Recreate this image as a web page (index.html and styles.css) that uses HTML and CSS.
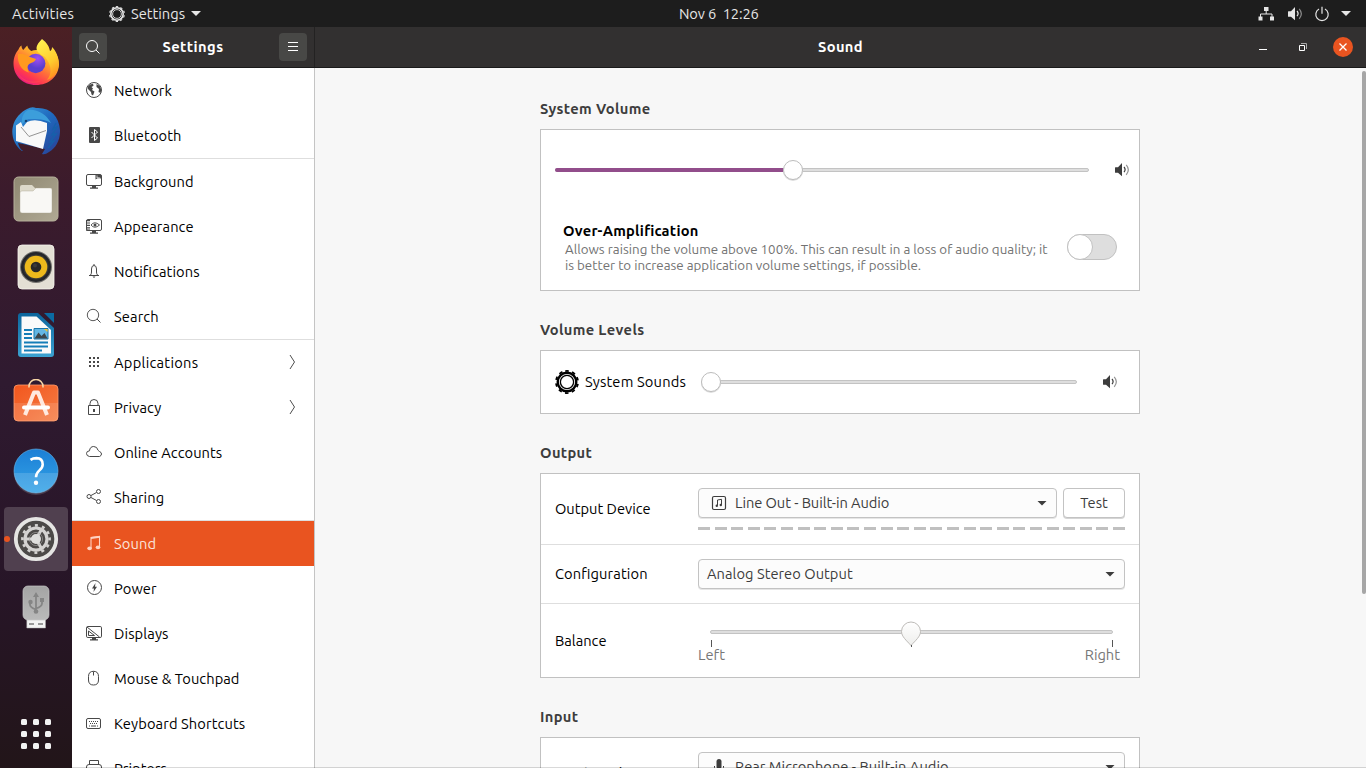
FILE: index.html
```html
<!DOCTYPE html>
<html lang="en">
<head>
<meta charset="utf-8">
<title>Settings - Sound</title>
<link rel="stylesheet" href="styles.css">
</head>
<body>
<svg class="defs" width="0" height="0">
  <defs>
    <linearGradient id="ffBody" x1=".85" y1=".05" x2=".2" y2=".95"><stop offset="0" stop-color="#fff44f"/><stop offset=".3" stop-color="#ffb52a"/><stop offset=".55" stop-color="#ff7139"/><stop offset=".8" stop-color="#ff3750"/><stop offset="1" stop-color="#e5178a"/></linearGradient>
    <linearGradient id="ffFlame" x1=".3" y1="0" x2=".7" y2="1"><stop offset="0" stop-color="#fff04e"/><stop offset=".6" stop-color="#ffcb2e"/><stop offset="1" stop-color="#ff8a1e"/></linearGradient>
    <radialGradient id="ffGlobe" cx=".6" cy=".25"><stop offset="0" stop-color="#a04ff2"/><stop offset="1" stop-color="#5a3fd0"/></radialGradient>
    <linearGradient id="tb" x1="0" y1="0" x2="1" y2="1"><stop offset="0" stop-color="#3ba0e0"/><stop offset=".5" stop-color="#1f68bd"/><stop offset="1" stop-color="#2a3f94"/></linearGradient>
    <linearGradient id="bag" x1="0" y1="0" x2="1" y2="1"><stop offset="0" stop-color="#f2561d"/><stop offset="1" stop-color="#f57d45"/></linearGradient>
    <linearGradient id="help" x1="0" y1="0" x2="0" y2="1"><stop offset="0" stop-color="#1c7fd6"/><stop offset="1" stop-color="#33a3e6"/></linearGradient>
    <linearGradient id="files" x1="0" y1="0" x2="1" y2="1"><stop offset="0" stop-color="#8f8872"/><stop offset="1" stop-color="#b0a994"/></linearGradient>
    <linearGradient id="usb" x1="0" y1="0" x2="0" y2="1"><stop offset="0" stop-color="#a4a4a4"/><stop offset="1" stop-color="#bababa"/></linearGradient>
    <linearGradient id="writer" x1="0" y1="0" x2="0" y2="1"><stop offset="0" stop-color="#0b659c"/><stop offset="1" stop-color="#3ba2d1"/></linearGradient>
    <linearGradient id="knob" x1="0" y1="0" x2="0" y2="1"><stop offset="0" stop-color="#fff"/><stop offset="1" stop-color="#eeeeec"/></linearGradient>
    <g id="gear" fill="none" stroke="currentColor">
      <circle cx="12" cy="12" r="9.3" stroke-width="2.4"/>
      <circle cx="12" cy="12" r="6.6" stroke-width="1.3"/>
      <circle cx="12" cy="12" r="11.1" stroke-width="1.7" stroke-dasharray="3.5 3.475" transform="rotate(-99 12 12)"/>
    </g>
    <g id="speaker">
      <path d="M1 5.5Q1 5 1.5 5H4l4-4.2V14L4 10.5H1.5Q1 10.500 1 10Z" fill="currentColor" transform="translate(0 .2)"/>
      <path d="M10 5q2.200 2.500 0 5.200" fill="none" stroke="currentColor" stroke-width="1.200"/>
      <path d="M12.200 2.800q4.300 4.800 0 10" fill="none" stroke="currentColor" stroke-width="1.200" opacity=".55"/>
    </g>
  </defs>
</svg>

<header class="topbar">
  <span class="activities">Activities</span>
  <span class="appmenu">
    <svg width="16" height="16" viewBox="0 0 24 24"><use href="#gear"/></svg>
    <span class="applabel">Settings</span><i class="caret"></i>
  </span>
  <span class="clock">Nov 6&nbsp; 12:26</span>
  <span class="tray">
    <svg width="16" height="16" viewBox="0 0 16 16"><path d="M6 1h4.500v4H6zM.5 10.500h4v4h-4zM12 10.500h4v4h-4z" fill="currentColor"/><path d="M8.200 4v4M2.500 11V8h11.500v3" fill="none" stroke="currentColor"/></svg>
    <svg class="vol" width="16" height="16" viewBox="0 0 16 16"><use href="#speaker"/></svg>
    <svg width="16" height="16" viewBox="0 0 16 16"><path d="M5 3A6.200 6.200 0 1 0 11 3M8 .8v7" fill="none" stroke="currentColor" stroke-width="1.200"/></svg>
    <i class="caret"></i>
  </span>
</header>

<div class="workspace">
<nav class="dock">
  <div class="app"><svg viewBox="0 0 48 48">
    <path d="M24 46C11 46 1.500 37 1.500 24.500 1.500 18 4 13.500 6.500 10.500 7 9 8 7.500 9.500 6.500c0 2 .7 3.500 1.700 4.400l4-4.500c.5 2 1.800 4 4 5.500C24 10 31 12 31 12L43 13q4 6 4 12.500C46.500 37.500 37 46 24 46Z" fill="url(#ffBody)"/>
    <path d="M30 0c5 4 7 7 8 12 1.500-.5 2-2 2-4 4 4 6.700 9.500 6.800 17C46 34 41 39 35 41 41 34 39 25 33 18 24 13 21 9 30 0Z" fill="url(#ffFlame)"/>
    <circle cx="23.700" cy="24.500" r="9.700" fill="url(#ffGlobe)"/>
    <path d="M6 15c4-1 9 1 12 3 2 1 4 1 6 2-1 3-4 3.500-6 4.500-3 1.500-3 5-1 9-8-2-12-10-11-18.500Z" fill="#ff9a1f"/>
    <path d="M4 31c5 11 18 15 30 8-9 8-25 7-30-8Z" fill="#ff4754" opacity=".6"/>
  </svg></div>
  <div class="app"><svg viewBox="0 0 48 48">
    <path d="M10 44C2 38-1 28 .8 20 2.500 11 9 5 15 2q5-3 9-1C38 0 47 9 48 23c.3 10-4 18-11 22q-4 3-7 2l3-5-22-5-5-1q1 5 5 8Z" fill="url(#tb)"/>
    <path d="M16 3c9-1 18 4 23 13-6-4-14-4-23-4l-6 5C9 10 12 5 16 3Z" fill="#3c9edb"/>
    <path d="M4 18.500 9 15l2 5 4-5q8-4 20 1L35 24 31 42 4 34Z" fill="#f8f8f8"/>
    <path d="m9 20 8 9.500L34 23.500" fill="none" stroke="#888" stroke-width=".9"/>
    <path d="m44 16-3 6 4-2-5 8 4-1-6 8 4-1-6 7" fill="none" stroke="#1660aa" stroke-width="1.400"/>
    <circle cx="14" cy="14" r="1.300" fill="#154172"/>
  </svg></div>
  <div class="app"><svg viewBox="0 0 48 48">
    <rect x="2" y="2" width="44" height="44" rx="4.500" fill="url(#files)" stroke="#b6b09b"/>
    <path d="M8 12q0-2 2-2h10l3 3h15q2 0 2 2v7H8Z" fill="#ddd9ca"/>
    <path d="M8 18q0-2 2-2h11l3-3h14q2 0 2 2v21q0 2-2 2H10q-2 0-2-2Z" fill="#f9f8f5" stroke="#aaa48f" stroke-width=".4"/>
  </svg></div>
  <div class="app"><svg viewBox="0 0 48 48">
    <rect x="6" y="2" width="36" height="44" rx="4" fill="#e3dfd4" stroke="#f7f5ef" stroke-width=".8"/>
    <circle cx="24" cy="24" r="16" fill="#74736f"/><circle cx="24" cy="24" r="15" fill="#24262a"/><circle cx="24" cy="24" r="12.500" fill="#3c3b35"/><circle cx="24" cy="24" r="11.300" fill="#edb91c"/><circle cx="24" cy="24" r="5.300" fill="#272727"/><circle cx="23" cy="22.500" r="2" fill="#3a3a3a"/>
  </svg></div>
  <div class="app"><svg viewBox="0 0 48 48">
    <path d="M9 2h17l16 15v26q0 3-3 3H9q-3 0-3-3V5q0-3 3-3Z" fill="url(#writer)"/>
    <path d="M32 2h10v10Z" fill="#0b6ba3"/>
    <path d="M9.500 5.500h15L39 19v23.500H9.500Z" fill="#fafafa"/>
    <path d="M12 19h8M12 23h8M12 27h8M12 31.500h24M12 35.500h24M12 39.500h18" stroke="#157db7" stroke-width="1.800"/>
    <path d="M22 17.500h14V28H22Z" fill="#63b7e4" stroke="#1976aa"/><path d="m22.500 27.500 4-6 3 3.500 3-3 3 5.500Z" fill="#3d474c"/><path d="M32 18h3.500v3Z" fill="#f7c52b"/>
  </svg></div>
  <div class="app"><svg viewBox="0 0 48 48">
    <rect x="2" y="6" width="44" height="36" rx="4" fill="url(#bag)" stroke="#ff9b6a" stroke-width=".8"/>
    <path d="M2 24h44v14q0 4-4 4H6q-4 0-4-4Z" fill="#fff" opacity=".13"/>
    <path d="M17 8.500V7.500a7 7 0 0 1 14 0v1" fill="none" stroke="#f8d6a6" stroke-width="1.600"/>
    <path d="m13 36 9-22.500h4L35 36" fill="none" stroke="#ffe9df" stroke-width="4" stroke-linejoin="round"/><path d="M12 28.500h24" stroke="#fff" stroke-width="4" stroke-linecap="round"/>
  </svg></div>
  <div class="app"><svg viewBox="0 0 48 48">
    <circle cx="24" cy="24" r="22" fill="url(#help)" stroke="#66b8ed" stroke-width=".6"/><path d="M2 26a22 22 0 0 0 44 0Z" fill="#fff" opacity=".15"/>
    <path d="M18.500 12.800q2.500-1.700 6-1.700 6.200.2 6.200 6.300 0 3-3.300 6-3.400 3-3.400 6.800" fill="none" stroke="#fff" stroke-width="2.600"/><circle cx="24" cy="35.700" r="2.200" fill="#fff"/>
  </svg></div>
  <div class="app active"><i class="running"></i><svg viewBox="0 0 48 48">
    <circle cx="24" cy="24" r="20.200" fill="#4c4a48" stroke="#e5e5e3" stroke-width="3.800"/>
    <g fill="none" stroke="#d4d3d1"><circle cx="24" cy="24" r="13.600" stroke-width="2.600" stroke-dasharray="3 4.121" transform="rotate(-6.300 24 24)"/><circle cx="24" cy="24" r="11" stroke-width="3.200"/><path d="M24 24h-11M24 24l5.500 9.500M24 24l5.500-9.500" stroke-width="3"/></g>
    <circle cx="24" cy="24" r="5" fill="#dededc"/><circle cx="24" cy="24" r="6.600" fill="none" stroke="#a9a8a6" stroke-width=".6"/>
  </svg></div>
  <div class="app"><svg viewBox="0 0 48 48">
    <path d="M14.800 36h18.700v9H14.800z" fill="#f3f3f3" stroke="#aaa" stroke-width=".5"/><path d="M17 41h5M26 41h5" stroke="#999" stroke-width="1.800"/>
    <rect x="11" y="3" width="26" height="34" rx="5" fill="url(#usb)" stroke="#c5c5c5" stroke-width=".7"/>
    <path d="M24 13v15M18 19v2.500q0 3 6 5M30 18v2.500q0 3-6 5" fill="none" stroke="#858585" stroke-width="1.800"/><path d="m24 9 3 5h-6ZM28 15h4v4h-4z" fill="#858585"/><circle cx="18.500" cy="19" r="2.200" fill="#858585"/><circle cx="24" cy="28.500" r="2.300" fill="#858585"/>
  </svg></div>
  <div class="grid9"><i></i><i></i><i></i><i></i><i></i><i></i><i></i><i></i><i></i></div>
</nav>

<section class="window">
  <div class="titlebar">
    <div class="left">
      <span class="tbtn"><svg width="16" height="16" viewBox="0 0 16 16"><circle cx="7" cy="7" r="5.500" fill="none" stroke="#fff"/><path d="m11 11 3.500 3.500" stroke="#fff"/></svg></span>
      <b class="wtitle">Settings</b>
      <span class="tbtn"><svg width="16" height="16" viewBox="0 0 16 16"><path d="M3 3.500h10M3 7.500h10M3 11.500h10" stroke="#fff"/></svg></span>
    </div>
    <div class="right">
      <b class="wtitle">Sound</b>
      <div class="controls">
        <svg width="16" height="16" viewBox="0 0 16 16"><path d="M4 10.500h8" stroke="#fff"/></svg>
        <svg width="16" height="16" viewBox="0 0 16 16"><path d="M4.500 6.500h5v5h-5z" fill="none" stroke="#fff"/><path d="M6 4.500h5.500V10" fill="none" stroke="#aaa"/></svg>
        <span class="close"><svg width="16" height="16" viewBox="0 0 16 16"><path d="m4.500 4.500 7 7m0-7-7 7" stroke="#fff" stroke-width="1.300"/></svg></span>
      </div>
    </div>
  </div>

  <div class="body">
  <aside class="sidebar">
    <div class="item"><svg viewBox="0 0 16 16"><circle cx="8" cy="8" r="7.500" fill="none" stroke="currentColor"/><path d="M1.500 5 4 2.500l3-.8.5 2L5.500 5 7 6.500 6 8l2.500 1.500L7 13.500 5.500 12.500 5 10 2 7ZM10.500 2l3.500 2 1.300 4-.8 3-2-1 .5-3-2.500-2Z" fill="currentColor"/></svg><span>Network</span></div>
    <div class="item"><svg viewBox="0 0 16 16"><rect x="3" width="11" height="16" rx="1" fill="currentColor"/><path d="m5.500 5 6 6L8.500 13.500v-11L11.500 5l-6 6" fill="none" stroke="#fff"/></svg><span>Bluetooth</span></div>
    <div class="item sep"><svg viewBox="0 -1 16 16"><rect x=".5" y=".5" width="15" height="11" rx="1.500" fill="none" stroke="currentColor"/><path d="M9.500 .5l0 5q3-2 6-.5V1.500L14 .5Z" fill="currentColor"/><path d="M11 1.500V4q2-.8 3.500.3" fill="none" stroke="#fff" stroke-width=".7"/><path d="M6 12h4v1.500h2v1.200H4v-1.200h2Z" fill="currentColor"/></svg><span>Background</span></div>
    <div class="item"><svg viewBox="0 -1 16 16"><rect x=".5" y=".5" width="15" height="11" rx="1.500" fill="none" stroke="currentColor"/><path d="M2 1v11" stroke="currentColor" stroke-width="4" stroke-dasharray="1.200 1.200"/><path d="M5 6q3.500-4.500 8.500 0-5 4.500-8.500 0Z" fill="none" stroke="currentColor" stroke-width=".9"/><circle cx="9" cy="6" r="1.500" fill="currentColor"/><path d="M6 12h4v1.500h2v1.200H4v-1.200h2Z" fill="currentColor"/></svg><span>Appearance</span></div>
    <div class="item"><svg viewBox="0 0 16 16"><path d="M3 12.500h10M4.500 12q1-1 1-3V6q0-3.500 2.500-3.500T10.500 6v3q0 2 1 3M8 1v1.500" fill="none" stroke="currentColor"/><path d="M6.500 13.500h3L8 15Z" fill="currentColor"/></svg><span>Notifications</span></div>
    <div class="item"><svg viewBox="0 0 16 16"><circle cx="7" cy="7" r="5.700" fill="none" stroke="currentColor" stroke-width=".9"/><path d="m11 11 3.500 3.500" stroke="currentColor"/></svg><span>Search</span></div>
    <div class="item sep"><svg viewBox="0 0 16 16"><path d="M3 4h10M3 8h10M3 12h10" stroke="currentColor" stroke-width="2" stroke-dasharray="2 2"/></svg><span class="wide">Applications</span><svg class="chev" viewBox="0 0 8 16"><path d="m2 1 4.500 7L2 15" fill="none" stroke="#4d4d4d"/></svg></div>
    <div class="item"><svg viewBox="0 0 16 16"><path d="M2.500 6.500h11v9h-11zM4 6V4.500q0-4 4-4t4 4V6" fill="none" stroke="currentColor"/><path d="M7 10h2v3H7z" fill="currentColor"/></svg><span>Privacy</span><svg class="chev" viewBox="0 0 8 16"><path d="m2 1 4.500 7L2 15" fill="none" stroke="#4d4d4d"/></svg></div>
    <div class="item"><svg viewBox="0 0 16 16"><path d="M3.500 12.500Q.5 12 .5 9.500T3.500 6.800Q4 2.500 7.700 2.500q3.500 0 4.300 3.700.5.500 1.500 1.300 2 .8 2 2.500t-2 2.500Z" fill="none" stroke="currentColor"/></svg><span class="narrow">Online Accounts</span></div>
    <div class="item"><svg viewBox="0 0 16 16"><g fill="none" stroke="currentColor"><circle cx="3" cy="7.500" r="2"/><circle cx="12.500" cy="2.500" r="2"/><circle cx="12.500" cy="12.500" r="2"/><path d="m5 6.500 5.500-3M5 8.500l5.500 3"/></g></svg><span>Sharing</span></div>
    <div class="item sep selected"><svg viewBox="0 0 16 16"><path d="M5 13V2.500l8.500-1V12" fill="none" stroke="currentColor" stroke-width="1.100"/><path d="M5 2l9-1.200v2L5 4Z" fill="currentColor"/><ellipse cx="3.600" cy="13.300" rx="2.300" ry="1.900" fill="currentColor"/><ellipse cx="12" cy="12.300" rx="2.300" ry="1.900" fill="currentColor"/></svg><span>Sound</span></div>
    <div class="item"><svg viewBox="0 0 16 16"><circle cx="8.500" cy="7.500" r="7" fill="none" stroke="currentColor"/><path d="m9.500 3-3.500 5.500h2L7.500 12 11 6.800H9Z" fill="currentColor"/></svg><span>Power</span></div>
    <div class="item"><svg viewBox="0 0 16 16"><rect x=".5" y="1.500" width="15" height="11" rx="1.300" fill="none" stroke="currentColor"/><path d="m1 2 12.500 10M2.500 6v4.500h6Z" fill="none" stroke="currentColor"/><path d="M6 13h4v1.300h2v1.200H4v-1.200h2Z" fill="currentColor"/></svg><span>Displays</span></div>
    <div class="item"><svg viewBox="0 -.5 16 16"><path d="M2.500 6Q2.500.8 7.500.8T12.500 6v3.500q0 5-5 5t-5-5ZM7.500 1v4" fill="none" stroke="currentColor"/></svg><span class="narrow">Mouse &amp; Touchpad</span></div>
    <div class="item"><svg viewBox="0 -1 16 16"><rect x=".5" y="2.500" width="14" height="10" rx="1.500" fill="none" stroke="currentColor"/><path d="M3 5.500h10M4 7.500h8" stroke="currentColor" stroke-dasharray="1 1"/><path d="M3 10h1m1 0h5m1 0h1" stroke="currentColor"/></svg><span>Keyboard Shortcuts</span></div>
    <div class="item"><svg viewBox="0 0 16 16"><path d="M3.500 4.500v-4h9v4M2.500 12.500Q.5 12.500.5 10.500V7q0-2.500 2.500-2.500h10q2.500 0 2.500 2.500v3.500q0 2-2 2M3.500 9.500h9v6h-9z" fill="none" stroke="currentColor"/></svg><span>Printers</span></div>
  </aside>

  <main class="content">
    <div class="page">
      <h2>System Volume</h2>
      <div class="card volume">
        <div class="volrow">
          <div class="slider"><div class="fill" style="width:44.5%"></div><i class="knob" style="left:44.5%"></i></div>
          <svg width="16" height="16" viewBox="0 0 16 16"><use href="#speaker"/></svg>
        </div>
        <div class="amprow">
          <div class="amptext">
            <b>Over-Amplification</b>
            <p><span class="tight">Allows raising the volume above 100%. This can result in a loss of audio quality; it</span><br><span>is better to increase application volume settings, if possible.</span></p>
          </div>
          <div class="switch"><i></i></div>
        </div>
      </div>

      <h2>Volume Levels</h2>
      <div class="card levels">
        <svg width="24" height="24" viewBox="0 0 24 24"><use href="#gear"/></svg>
        <span class="syslabel">System Sounds</span>
        <div class="slider"><i class="knob" style="left:0"></i></div>
        <svg class="spk" width="16" height="16" viewBox="0 0 16 16"><use href="#speaker"/></svg>
      </div>

      <h2>Output</h2>
      <div class="card output">
        <div class="row device">
          <span class="label">Output Device</span>
          <div class="field">
            <div class="line">
              <div class="combo"><svg width="16" height="16" viewBox="0 0 16 16"><rect x="1.500" y="1.500" width="13" height="13" rx="1.500" fill="none" stroke="currentColor" stroke-width="1.200"/><path d="M6.500 10.500V5l4-.7v5.500" fill="none" stroke="currentColor"/><circle cx="5.800" cy="10.800" r="1.200" fill="currentColor"/><circle cx="9.800" cy="10" r="1.200" fill="currentColor"/></svg><span class="lineout">Line Out - Built-in Audio</span><i class="caret dark"></i></div>
              <div class="button"><span>Test</span></div>
            </div>
            <div class="meter"></div>
          </div>
        </div>
        <div class="row config">
          <span class="label wide">Configuration</span>
          <div class="combo plain"><span>Analog Stereo Output</span><i class="caret dark"></i></div>
        </div>
        <div class="row balance">
          <span class="label">Balance</span>
          <div class="field">
            <div class="slider"><svg class="drop" width="22" height="27" viewBox="0 0 22 27"><path d="M11 1a9.500 9.500 0 0 1 9.500 9.500c0 5-5 9-9.500 14-4.500-5-9.500-9-9.500-14A9.500 9.500 0 0 1 11 1Z" fill="url(#knob)" stroke="#bdbbb8"/><path d="M11.500 24v2" stroke="#555"/></svg></div>
            <div class="ticks"><i></i><i></i></div>
            <div class="ends"><span>Left</span><span>Right</span></div>
          </div>
        </div>
      </div>

      <h2>Input</h2>
      <div class="card input">
        <div class="row device">
          <span class="label">Input Device</span>
          <div class="field">
            <div class="combo"><svg width="16" height="16" viewBox="0 0 16 16"><rect x="5.500" y="0" width="5" height="10" rx="2.500" fill="currentColor"/><path d="M3.500 7v1.500q0 4 4.500 4t4.500-4V7M8 12.500V15" fill="none" stroke="currentColor"/></svg><span>Rear Microphone - Built-in Audio</span><i class="caret dark"></i></div>
          </div>
        </div>
      </div>
    </div>
    <div class="scrollbar"></div>
  </main>
  </div>
</section>
</div>
</body>
</html>
```
FILE: styles.css
```css
* { box-sizing: border-box; }
html, body { margin: 0; height: 768px; overflow: hidden; }
body { width: 1366px; font: 14.667px/20px "Ubuntu", "Noto Sans", sans-serif; font-feature-settings: "liga" 1; color: #000; display: flex; flex-direction: column; background: #f7f7f7; }
svg { flex: none; display: block; }
.defs { position: absolute; }
span { white-space: nowrap; }
i { display: block; flex: none; }

.topbar { flex: none; height: 27px; background: #1d1d1d; color: #e6e6e6; display: grid; grid-template-columns: 97px 1fr auto 1fr; align-items: center; padding: 0 15px 0 12px; position: relative; }
.activities { letter-spacing: .2px; }
.appmenu { display: flex; align-items: center; gap: 6px; }
.clock { position: absolute; left: 679px; letter-spacing: -.12px; }
.tray { grid-column: 4; justify-self: end; display: flex; align-items: center; gap: 12px; }
.tray .vol { margin: 0 -1px 0 1px; }
.tray .caret { margin-left: -1px; }
.caret { width: 10px; height: 5px; background: currentColor; clip-path: polygon(0 0, 100% 0, 50% 100%); }
.caret.dark { background: #3d3d3d; margin-left: auto; }

.workspace { flex: 1; min-height: 0; display: flex; }
.dock { width: 72px; flex: none; padding: 4px 4px 0; display: flex; flex-direction: column; gap: 4px; background: linear-gradient(#4b2024 0, #3b1b2c 22%, #2f1a30 48%, #271527 76%, #221519); }
.app { height: 64px; flex: none; display: flex; align-items: center; justify-content: center; border-radius: 4px; position: relative; }
.app svg { width: 48px; height: 48px; }
.app.active { background: #50404f; }
.running { position: absolute; left: 0; top: 29px; width: 6px; height: 6px; border-radius: 50%; background: #e95420; }
.grid9 { display: grid; grid-template-columns: repeat(3, 6px); gap: 6px; margin: 76px 0 0 17px; }
.grid9 i { width: 6px; height: 6px; border-radius: 1.5px; background: #f2f2f2; }

.window { flex: 1; min-width: 0; display: flex; flex-direction: column; }
.titlebar { height: 41px; flex: none; display: flex; background: #323030; border-bottom: 1px solid #1a1a1a; color: #fff; }
.titlebar .left { width: 243px; padding: 0 7px; display: flex; align-items: center; justify-content: space-between; border-right: 1px solid #232222; }
.wtitle { letter-spacing: .35px; }
.left .wtitle { letter-spacing: .42px; }
.tbtn { width: 28px; height: 28px; border-radius: 4px; background: #484846; display: flex; align-items: center; justify-content: center; }
.titlebar .right { flex: 1; display: grid; grid-template-columns: 1fr auto 1fr; align-items: center; }
.right .wtitle { grid-column: 2; }
.controls { justify-self: end; display: flex; align-items: center; gap: 24px; padding-right: 13px; }
.close { width: 20px; height: 20px; margin-left: -2px; border-radius: 50%; background: #e95420; display: flex; align-items: center; justify-content: center; }

.body { flex: 1; min-height: 0; display: flex; overflow: hidden; position: relative; }
.body::after { content: ""; position: absolute; left: 0; right: 0; bottom: 0; height: 1px; background: rgba(0, 0, 0, .15); }
.sidebar { width: 243px; flex: none; background: #fff; border-right: 1px solid #c4c4c4; overflow: hidden; }
.item { height: 45px; display: flex; align-items: center; padding-left: 14px; color: #484848; letter-spacing: .11px; }
.item > svg { width: 16px; height: 16px; margin: -1px 12px 0 0; }
.item > span { color: #000; }
.item .chev { width: 8px; margin: -1px 18px 0 auto; }
.item.sep { height: 46px; border-top: 1px solid #dedede; }
.item.selected { background: #e95420; background-clip: padding-box; color: #ffd2c1; }
.item.selected > span { color: #fbe4dc; }
.item .wide { letter-spacing: .28px; }
.item .narrow { letter-spacing: .05px; }

.content { flex: 1; min-width: 0; background: #f7f7f7; position: relative; overflow: hidden; }
.page { width: 600px; margin-left: 225px; }
h2 { margin: 0; font-size: 14.667px; line-height: 20px; padding: 29px 0 10px; color: #3d3d3d; white-space: nowrap; letter-spacing: .35px; }
.page > h2:first-child { padding-top: 31px; }
.card { background: #fff; border: 1px solid #c1c1c1; }
.scrollbar { position: absolute; right: 0; top: 3px; width: 4px; height: 523px; border-radius: 2px; background: #a6a6a6; }

.slider { height: 4px; border-radius: 2px; background: #dedede; border: 1px solid #c3c3c3; position: relative; flex: 1; }
.fill { height: 4px; margin: -1px; border-radius: 2px; background: #924d8b; }
.knob { position: absolute; width: 20px; height: 20px; top: -9px; margin-left: -10px; border-radius: 50%; background: #fff; border: 1px solid #bcbcbc; box-shadow: 0 1px 0 #ddd; }
.volume { height: 162px; display: flex; flex-direction: column; }
.volrow { height: 80px; display: flex; align-items: center; padding: 0 9px 0 14px; gap: 25px; color: #3d3d3d; }
.amprow { display: flex; justify-content: space-between; padding: 11px 22px 0; }
.amptext b { display: block; line-height: 20px; letter-spacing: .25px; }
.amptext p { margin: 1px 0 0 2px; font-size: 13.333px; line-height: 16px; color: #727272; }
.tight { letter-spacing: .02px; }
.switch { width: 50px; height: 26px; margin-top: 13px; border-radius: 13px; background: #dedede; border: 1px solid #c1c1c1; }
.switch i { width: 26px; height: 26px; margin: -1px; border-radius: 50%; background: #fff; border: 1px solid #c1c1c1; }
.levels { height: 64px; display: flex; align-items: center; padding: 0 21px 0 14px; }
.syslabel { width: 116px; margin-left: 6px; letter-spacing: .18px; }
.levels .slider { margin-left: 9px; margin-right: 25px; }
.levels .spk { color: #3d3d3d; }

.row { display: flex; padding: 0 14px; }
.row + .row { border-top: 1px solid #dedede; }
.label { width: 143px; flex: none; }
.label.wide { letter-spacing: .12px; }
.output .row { align-items: center; }
.field { flex: 1; min-width: 0; }
.line { display: flex; gap: 6px; }
.combo { flex: 1; height: 30px; border: 1px solid #c3c3c3; border-radius: 4px; background: #fcfcfc; box-shadow: 0 1px 0 #e6e6e6; display: flex; align-items: center; padding: 0 9px 0 12px; color: #3d3d3d; letter-spacing: .04px; }
.lineout { letter-spacing: -.06px; }
.combo > svg { margin-right: 8px; }
.combo.plain { padding-left: 8px; }
.button { width: 62px; height: 30px; border: 1px solid #c3c3c3; border-radius: 4px; background: #fff; box-shadow: 0 1px 0 #d5d5d5; display: flex; align-items: center; justify-content: center; color: #3d3d3d; }
.output .device { height: 70px; }
.meter { height: 3px; margin-top: 9px; background: repeating-linear-gradient(90deg, #c0c0c0 0 12px, #fff 12px 16.6px); }
.output .config { height: 59px; }
.output .balance { height: 74px; align-items: stretch; }
.balance .label { padding-top: 27px; }
.balance .field { padding-top: 26px; }
.balance .slider { margin: 0 12px; }
.drop { position: absolute; left: 50%; top: -10px; margin-left: -12px; }
.ticks { display: flex; justify-content: space-between; margin: 6px 12px 0 13px; }
.ticks i { width: 1px; height: 7px; background: #555; }
.ends { display: flex; justify-content: space-between; margin-top: -2px; padding-right: 5px; color: #777; }
.input { height: 90px; padding-top: 14px; }
.input .label { padding-top: 11px; }
```
